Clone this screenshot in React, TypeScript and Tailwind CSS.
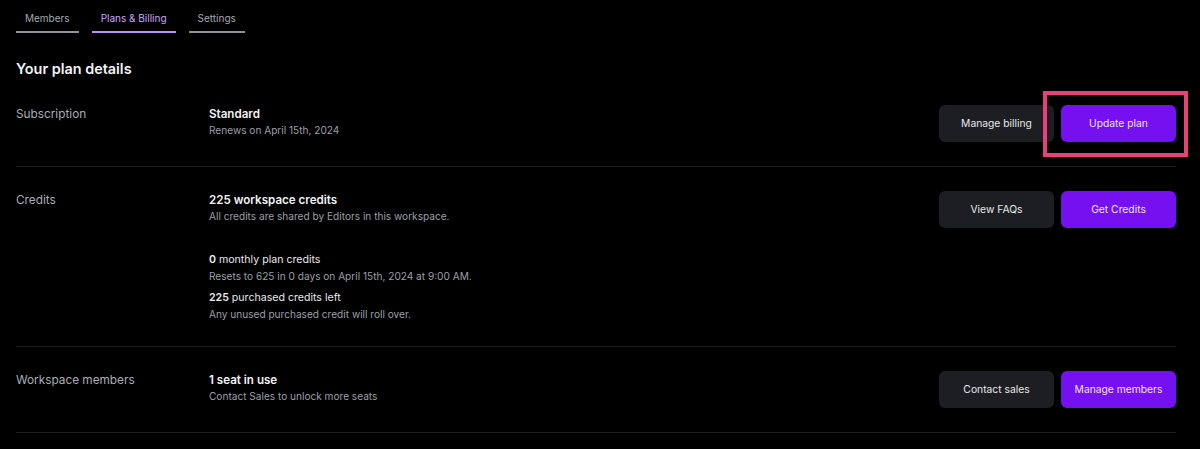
import type { ReactNode } from 'react'

// ─── Tabs ─────────────────────────────────────────────────────────────────────

const tabs = [
  { label: 'Members', active: false },
  { label: 'Plans & Billing', active: true },
  { label: 'Settings', active: false },
]

function Tabs() {
  return (
    <div className="flex gap-[13px] pt-[11px]">
      {tabs.map((t) => (
        <div
          key={t.label}
          className={
            t.active
              ? 'px-[9px] pb-[5px] border-b-2 border-[#b98ff0] text-[10px] leading-[15px] text-[#c9a8f7]'
              : 'px-[9px] pb-[5px] border-b-2 border-[#8d939c] text-[10px] leading-[15px] text-[#a3a9b3]'
          }
        >
          {t.label}
        </div>
      ))}
    </div>
  )
}

// ─── Row ──────────────────────────────────────────────────────────────────────

function Btn({ children, primary }: { children: ReactNode; primary?: boolean }) {
  return (
    <button
      className={
        primary
          ? 'w-[115px] h-[37px] rounded-[6px] bg-[#7510f0] text-[10.3px] text-[#ece2fd]'
          : 'w-[115px] h-[37px] rounded-[6px] bg-[#1d1e21] text-[10.3px] text-[#e6e7ea]'
      }
    >
      {children}
    </button>
  )
}

interface RowProps {
  label: string
  children: ReactNode
  actions: ReactNode
}

function Row({ label, children, actions }: RowProps) {
  return (
    <div className="flex items-start py-[24px] border-b border-[#1b1c1f]">
      <div className="w-[193px] shrink-0 pt-[1px] text-[11.8px] leading-[16px] text-[#a7adb7]">{label}</div>
      <div className="flex-1 pt-[1px]">{children}</div>
      <div className="flex gap-[7px]">{actions}</div>
    </div>
  )
}

const title = 'text-[11.6px] font-semibold text-[#f2f3f5] leading-[16px]'
const sub = 'text-[10.1px] text-[#9a9fa8] leading-[16px]'
const line = 'text-[10.6px] text-[#e8e9ec] leading-[16px]'

// ─── App ──────────────────────────────────────────────────────────────────────

export default function App() {
  return (
    <div
      className="min-h-[449px] bg-black pl-4 pr-6"
      style={{ fontFamily: 'Inter, "Noto Sans", sans-serif' }}
    >
      <Tabs />

      <h1 className="mt-[26px] text-[14.4px] leading-[20px] font-semibold text-[#f3f4f6]">Your plan details</h1>

      <div className="mt-[2px]">
        <Row
          label="Subscription"
          actions={
            <>
              <Btn>Manage billing</Btn>
              <div className="relative">
                <Btn primary>Update plan</Btn>
                {/* highlight frame */}
                <div className="absolute -left-[18px] -right-[12px] -top-[14px] -bottom-[15px] border-4 border-[#e8407a] pointer-events-none" />
              </div>
            </>
          }
        >
          <div className={title}>Standard</div>
          <div className={sub}>Renews on April 15th, 2024</div>
        </Row>

        <Row
          label="Credits"
          actions={
            <>
              <Btn>View FAQs</Btn>
              <Btn primary>Get Credits</Btn>
            </>
          }
        >
          <div className={title}>225 workspace credits</div>
          <div className={sub}>All credits are shared by Editors in this workspace.</div>

          <div className={line + ' mt-[28px]'}>
            <span className="font-semibold">0</span> monthly plan credits
          </div>
          <div className={sub}>Resets to 625 in 0 days on April 15th, 2024 at 9:00 AM.</div>

          <div className={line + ' mt-[6px]'}>
            <span className="font-semibold">225</span> purchased credits left
          </div>
          <div className={sub}>Any unused purchased credit will roll over.</div>
        </Row>

        <Row
          label="Workspace members"
          actions={
            <>
              <Btn>Contact sales</Btn>
              <Btn primary>Manage members</Btn>
            </>
          }
        >
          <div className={title}>1 seat in use</div>
          <div className={sub}>Contact Sales to unlock more seats</div>
        </Row>
      </div>
    </div>
  )
}
